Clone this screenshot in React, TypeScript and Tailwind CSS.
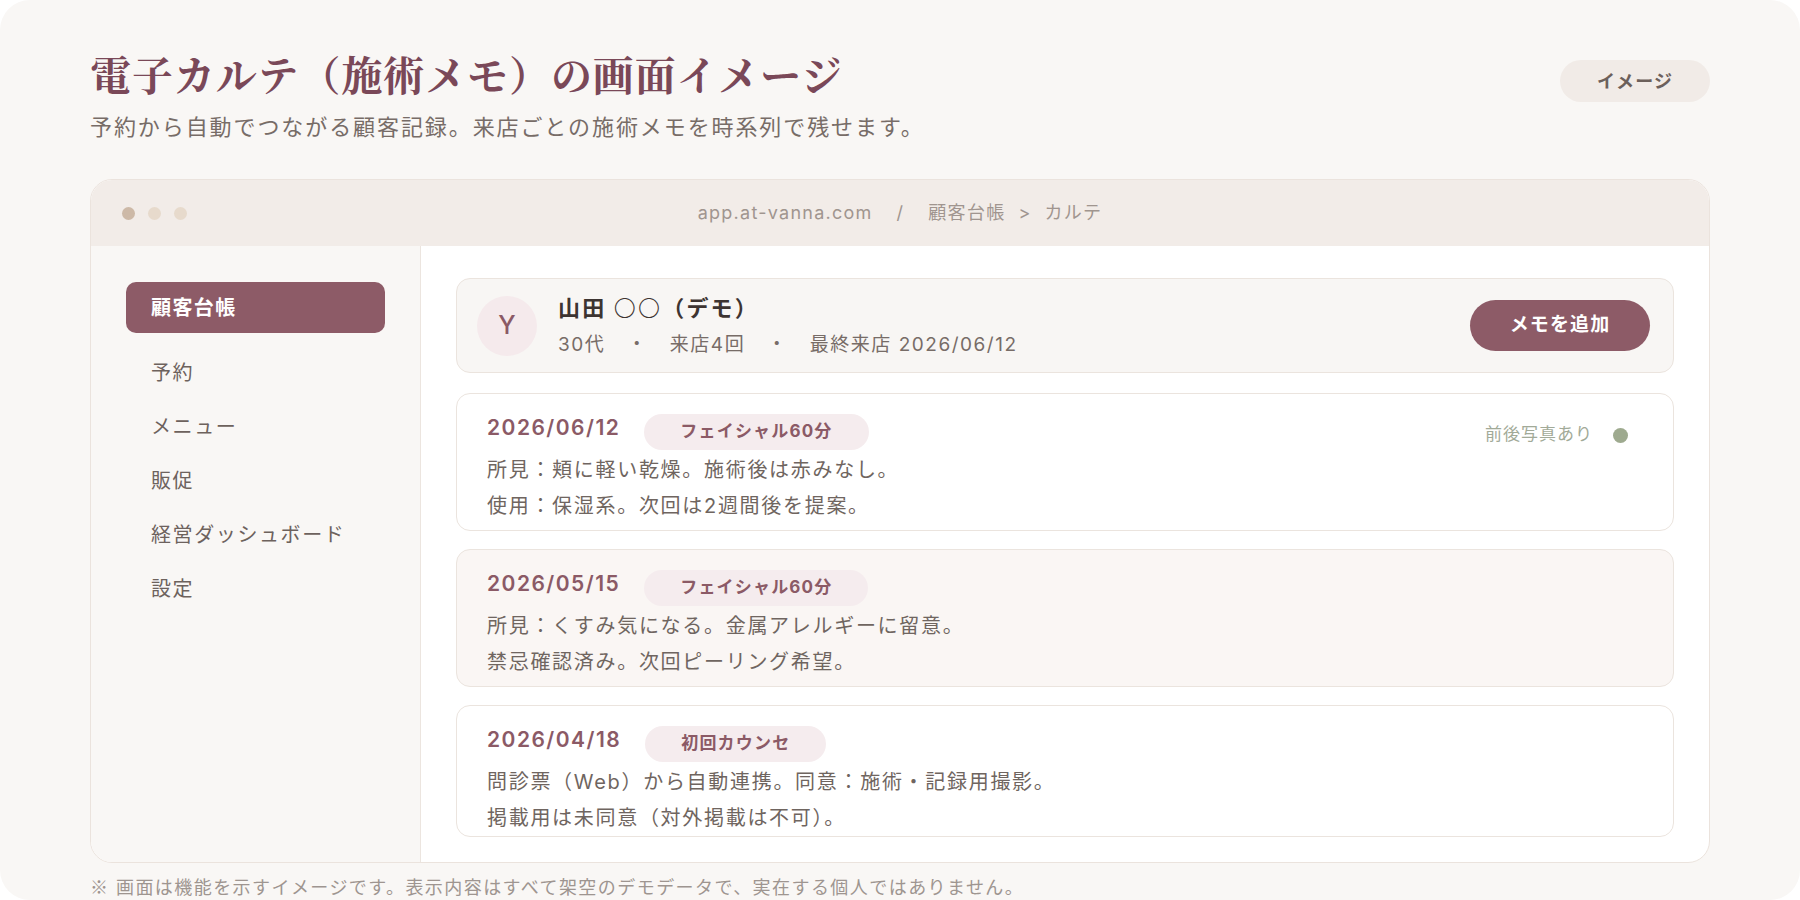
import React from "react";

const sans = '"Inter", "Noto Sans CJK JP", sans-serif';
const serif = '"Noto Serif CJK JP", "Liberation Serif", "Noto Sans CJK JP", serif';
const cjk = '"Noto Sans CJK JP", sans-serif';

function Entry({
  date,
  tag,
  lines,
  bg,
  status,
  last,
}: {
  date: string;
  tag: string;
  lines: string[];
  bg: string;
  status?: boolean;
  last?: boolean;
}) {
  return (
    <div
      className={`rounded-[14px] border border-[#ebe4de] pl-[30px] pr-[45px] pt-[20px] ${
        last ? "pb-0" : "pb-[6px]"
      } ${bg}`}
    >
      <div className="flex h-[36px] items-center">
        <div className="mb-[8px] text-[21px] font-semibold tracking-[0.07em] text-[#8b5a66]">{date}</div>
        <div className="ml-[24px] flex h-[36px] items-center rounded-full bg-[#f5ecee] px-[36px] text-[17px] font-bold tracking-[0.07em] text-[#8b5a66]">
          {tag}
        </div>
        {status && (
          <div className="ml-auto mt-[6px] flex items-center">
            <span className="text-[17px] tracking-[0.06em] text-[#a2aa98]">前後写真あり</span>
            <span className="ml-[20px] h-[15px] w-[15px] rounded-full bg-[#9eaa8f]" />
          </div>
        )}
      </div>
      <div className="mt-[2px]">
        {lines.map((l, i) => (
          <div key={i} className="text-[20px] leading-[36px] tracking-[0.085em] text-[#6f6560]">
            {l}
          </div>
        ))}
      </div>
    </div>
  );
}

export default function App() {
  return (
    <div className="min-h-screen bg-white" style={{ fontFamily: sans }}>
      <div className="h-[900px] overflow-hidden rounded-[30px] bg-[#f9f7f5] px-[90px] pt-[50px]">
        <div className="flex items-start justify-between">
          <div>
            <h1
              className="text-[41px] font-bold leading-[48px] tracking-[0.022em] text-[#7a4858]"
              style={{ fontFamily: serif }}
            >
              電子カルテ（施術メモ）の画面イメージ
            </h1>
            <p className="mt-[13px] text-[22px] leading-[32px] tracking-[0.087em] text-[#776c67]">
              予約から自動でつながる顧客記録。来店ごとの施術メモを時系列で残せます。
            </p>
          </div>
          <div className="mt-[10px] flex h-[42px] w-[150px] items-center justify-center rounded-full bg-[#f1ebe7] text-[18px] font-bold tracking-[0.06em] text-[#6c605b]">
            イメージ
          </div>
        </div>

        <div className="mt-[36px] flex h-[684px] flex-col overflow-hidden rounded-[22px] border border-[#ebe3dd] bg-white">
          <div className="relative flex h-[66px] shrink-0 items-center bg-[#f2ece8] px-[31px]">
            <div className="flex gap-[13px]">
              <span className="h-[13px] w-[13px] rounded-full bg-[#cdb9a7]" />
              <span className="h-[13px] w-[13px] rounded-full bg-[#e7dacc]" />
              <span className="h-[13px] w-[13px] rounded-full bg-[#e7dacc]" />
            </div>
            <div className="absolute inset-x-0 top-[19px] text-center text-[18px] tracking-[0.07em] text-[#a0958f]">
              app.at-vanna.com<span className="mx-[24px]">/</span>顧客台帳<span className="mx-[13px]">&gt;</span>カルテ
            </div>
          </div>
          <div className="flex min-h-0 flex-1">
            <aside className="w-[330px] shrink-0 border-r border-[#ece5df] bg-[#f9f7f5] px-[35px] pt-[36px]">
              <div className="flex h-[51px] items-center rounded-[10px] bg-[#8d5b67] pl-[25px] text-[20px] font-bold tracking-[0.07em] text-white">
                顧客台帳
              </div>
              <div className="mt-[13px] flex flex-col">
                {["予約", "メニュー", "販促", "経営ダッシュボード", "設定"].map((t) => (
                  <div
                    key={t}
                    className="flex h-[54px] items-center pl-[25px] text-[20px] tracking-[0.08em] text-[#6d625d]"
                  >
                    {t}
                  </div>
                ))}
              </div>
            </aside>
            <main className="flex min-w-0 flex-1 flex-col overflow-hidden px-[35px] pt-[32px]">
              <div className="flex h-[95px] shrink-0 items-center rounded-[14px] border border-[#ebe4de] bg-[#f8f6f4] pl-[20px] pr-[23px]">
                <div className="flex h-[60px] w-[60px] items-center justify-center rounded-full bg-[#f5eaec] text-[25px] font-medium text-[#8b5a66]">
                  Y
                </div>
                <div className="ml-[21px] flex flex-col gap-[8px]">
                  <div className="text-[22px] font-bold leading-[30px] tracking-[0.1em] text-[#3d3431]">
                    山田 <span className="font-light">〇〇</span>（デモ）
                  </div>
                  <div className="flex text-[19px] leading-[28px] tracking-[0.08em] text-[#776c67]">
                    <span>30代</span>
                    <span className="mx-[22px]">・</span>
                    <span>来店4回</span>
                    <span className="mx-[22px]">・</span>
                    <span>最終来店 2026/06/12</span>
                  </div>
                </div>
                <button className="ml-auto flex h-[51px] w-[180px] items-center justify-center rounded-full bg-[#8d5b67] text-[19px] font-bold tracking-[0.06em] text-white">
                  メモを追加
                </button>
              </div>
              <div className="mt-[20px] flex flex-col gap-[18px]">
                <Entry
                  date="2026/06/12"
                  tag="フェイシャル60分"
                  bg="bg-white"
                  status
                  lines={["所見：頬に軽い乾燥。施術後は赤みなし。", "使用：保湿系。次回は2週間後を提案。"]}
                />
                <Entry
                  date="2026/05/15"
                  tag="フェイシャル60分"
                  bg="bg-[#faf6f4]"
                  lines={["所見：くすみ気になる。金属アレルギーに留意。", "禁忌確認済み。次回ピーリング希望。"]}
                />
                <Entry
                  date="2026/04/18"
                  tag="初回カウンセ"
                  bg="bg-white"
                  last
                  lines={["問診票（Web）から自動連携。同意：施術・記録用撮影。", "掲載用は未同意（対外掲載は不可）。"]}
                />
              </div>
            </main>
          </div>
        </div>
        <p className="mt-[11px] text-[18px] leading-[24px] tracking-[0.08em] text-[#9e9590]">
          <span style={{ fontFamily: cjk }}>※</span> 画面は機能を示すイメージです。表示内容はすべて架空のデモデータで、実在する個人ではありません。
        </p>
      </div>
    </div>
  );
}
